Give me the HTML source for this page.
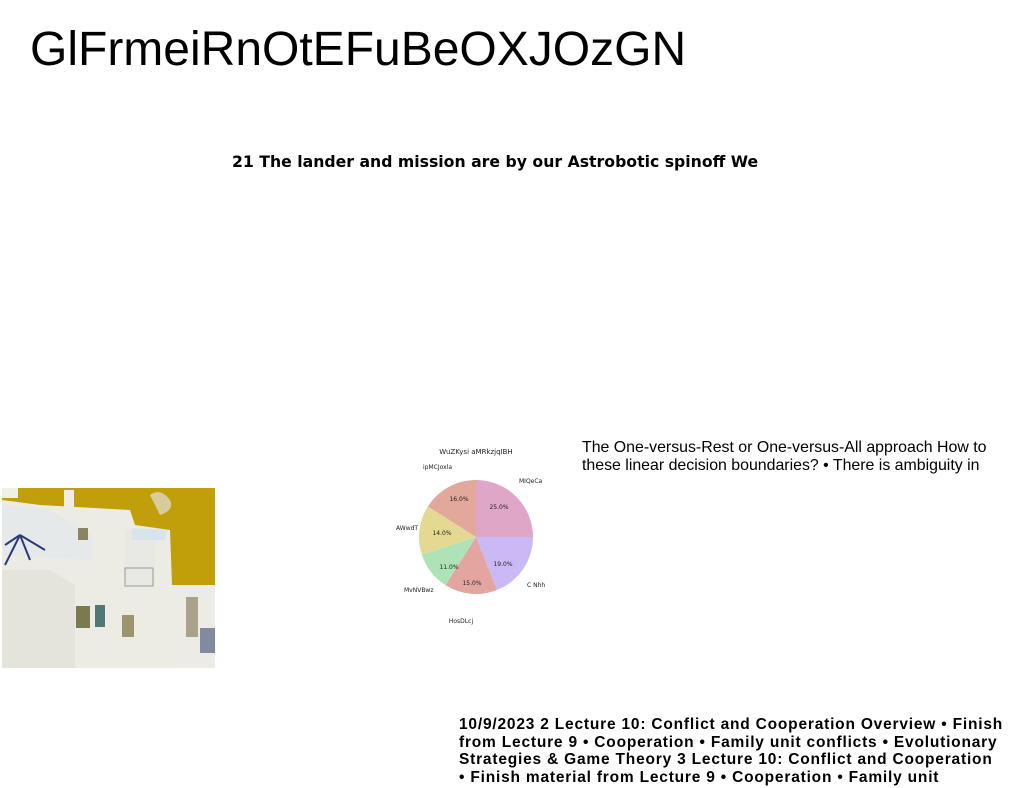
<!DOCTYPE html>
<html><head><meta charset="utf-8"><style>
*{margin:0;padding:0}
body{width:1024px;height:788px;background:#fff;position:relative;overflow:hidden;font-family:"Liberation Sans",sans-serif;color:#000}
.abs{position:absolute;white-space:nowrap}
</style></head><body>
<div class="abs" style="left:30px;top:22px;font-size:48px;line-height:56px;">GlFrmeiRnOtEFuBeOXJOzGN</div>
<div class="abs" style="left:232px;top:152px;font-family:'DejaVu Sans',sans-serif;font-weight:bold;font-size:15.7px;line-height:20px;">21 The lander and mission are by our Astrobotic spinoff We</div>
<div class="abs" style="left:582px;top:439px;font-size:15.9px;line-height:18px;">The One-versus-Rest or One-versus-All approach How to<br>these linear decision boundaries? • There is ambiguity in</div>
<div class="abs" style="left:459px;top:716px;font-weight:bold;font-size:15.5px;line-height:17.7px;letter-spacing:0.8px;">10/9/2023 2 Lecture 10: Conflict and Cooperation Overview • Finish<br>from Lecture 9 • Cooperation • Family unit conflicts • Evolutionary<br>Strategies &amp; Game Theory 3 Lecture 10: Conflict and Cooperation<br>• Finish material from Lecture 9 • Cooperation • Family unit</div>

<svg class="abs" style="left:0;top:0" width="1024" height="788">
<g font-family="DejaVu Sans,sans-serif" font-size="6" fill="#222">
<path d="M476,537 L476,480 A57,57 0 0 1 533,537 Z" fill="#e0a6c8"/>
<path d="M476,537 L533,537 A57,57 0 0 1 497,590 Z" fill="#cbb9f5"/>
<path d="M476,537 L497,590 A57,57 0 0 1 445.5,585.1 Z" fill="#e3a59f"/>
<path d="M476,537 L445.5,585.1 A57,57 0 0 1 421.8,554.6 Z" fill="#ade3b6"/>
<path d="M476,537 L421.8,554.6 A57,57 0 0 1 427.9,506.4 Z" fill="#e3d993"/>
<path d="M476,537 L427.9,506.4 A57,57 0 0 1 476,480 Z" fill="#e2a89c"/>
<text x="476" y="454" text-anchor="middle" font-size="7">WuZKysi aMRkzjqIBH</text>
<text x="519" y="483">MIQeCa</text>
<text x="527" y="587">C Nhh</text>
<text x="461" y="623" text-anchor="middle">HosDLcj</text>
<text x="404" y="592">MvNVBwz</text>
<text x="396" y="530">AWwdT</text>
<text x="423" y="469">ipMCJoxla</text>
<text x="499" y="509" text-anchor="middle">25.0%</text>
<text x="503" y="566" text-anchor="middle">19.0%</text>
<text x="472" y="585" text-anchor="middle">15.0%</text>
<text x="449" y="569" text-anchor="middle">11.0%</text>
<text x="442" y="535" text-anchor="middle">14.0%</text>
<text x="459" y="501" text-anchor="middle">16.0%</text>
</g>
<g>
<rect x="2" y="488" width="213" height="180" fill="#c09f0a"/>
<rect x="2" y="488" width="16" height="10" fill="#f0efe8"/>
<rect x="64" y="490" width="10" height="30" fill="#eeede6"/>
<path d="M2,500 L40,505 L130,510 L135,525 L170,530 L172,585 L178,585 L178,668 L2,668 Z" fill="#ecebe4"/>
<path d="M2,505 L50,510 L92,535 L92,560 L2,555 Z" fill="#e6e9ea"/>
<path d="M5,565 L20,535 M20,535 L45,550 M20,535 L30,560 M20,535 L5,545" stroke="#2c3a7a" stroke-width="2" fill="none"/>
<rect x="78" y="528" width="10" height="12" fill="#8a8460"/>
<rect x="125" y="530" width="30" height="55" fill="#e8e8e4"/>
<rect x="125" y="568" width="28" height="18" fill="none" stroke="#999" stroke-width="1"/>
<path d="M132,528 L168,530 L165,540 L132,540 Z" fill="#d8e4ec"/>
<rect x="175" y="585" width="40" height="83" fill="#ecebe5"/>
<rect x="186" y="597" width="12" height="40" fill="#a8a288"/>
<rect x="200" y="628" width="15" height="25" fill="#3a4a70" opacity="0.6"/>
<rect x="76" y="606" width="14" height="22" fill="#7a7a50"/>
<rect x="95" y="605" width="10" height="22" fill="#2a5a5a" opacity="0.8"/>
<rect x="122" y="615" width="12" height="22" fill="#9a9470"/>
<path d="M2,570 L50,570 L75,585 L75,668 L2,668 Z" fill="#e4e3dc"/>
<path d="M150,495 q10,-8 20,5 q5,10 -10,15 z" fill="#ddd6c0" opacity="0.8"/>
</g>
</svg>
</body></html>
